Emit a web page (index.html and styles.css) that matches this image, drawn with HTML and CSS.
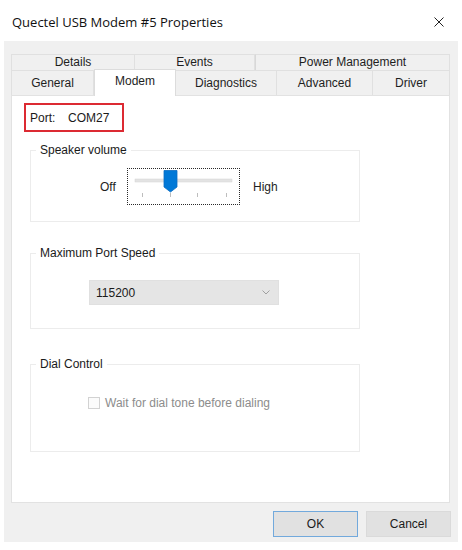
FILE: index.html
```html
<!DOCTYPE html>
<html>
<head>
<meta charset="utf-8">
<link rel="stylesheet" href="styles.css">
</head>
<body>
<div class="window">
  <div class="titlebar">
    <span class="title">Quectel USB Modem #5 Properties</span>
    <svg class="close" width="10" height="10" viewBox="0 0 10 10"><path d="M0.5 0.5 L9.5 9.5 M9.5 0.5 L0.5 9.5" stroke="#222" stroke-width="1" fill="none"/></svg>
  </div>
  <div class="dialog">
    <div class="tabs">
      <div class="tabrow upper">
        <div class="tab t-details">Details</div>
        <div class="tab t-events">Events</div>
        <div class="tab t-power">Power Management</div>
      </div>
      <div class="tabrow lower">
        <div class="tab t-general">General</div>
        <div class="tab t-modem selected">Modem</div>
        <div class="tab t-diag">Diagnostics</div>
        <div class="tab t-adv">Advanced</div>
        <div class="tab t-driver">Driver</div>
      </div>
    </div>
    <div class="panel">
      <div class="port"><span class="port-label">Port:</span><span class="port-value">COM27</span></div>

      <fieldset class="group g-speaker">
        <legend>Speaker volume</legend>
        <div class="slider-row">
          <span class="lbl-off">Off</span>
          <div class="slider">
            <svg width="111" height="35" viewBox="0 0 111 35">
              <rect x="7" y="10" width="97" height="3" fill="#e3e3e3" stroke="#d4d4d4" stroke-width="0.5"/>
              <g stroke="#bdbdbd" stroke-width="1">
                <line x1="14.5" y1="24" x2="14.5" y2="28"/>
                <line x1="42.5" y1="24" x2="42.5" y2="28"/>
                <line x1="69.5" y1="24" x2="69.5" y2="28"/>
                <line x1="98.5" y1="24" x2="98.5" y2="28"/>
              </g>
              <path d="M36 1.5 H49 V18 L42.5 23 L36 18 Z" fill="#0078d7" stroke="#0a6cc2" stroke-width="0.8"/>
            </svg>
          </div>
          <span class="lbl-high">High</span>
        </div>
      </fieldset>

      <fieldset class="group g-speed">
        <legend>Maximum Port Speed</legend>
        <div class="combo">
          <span>115200</span>
          <svg width="8" height="5" viewBox="0 0 8 5"><path d="M0.5 0.5 L4 4 L7.5 0.5" stroke="#a0a0a0" stroke-width="1" fill="none"/></svg>
        </div>
      </fieldset>

      <fieldset class="group g-dial">
        <legend>Dial Control</legend>
        <label class="check">
          <span class="box"></span>
          <span class="check-text">Wait for dial tone before dialing</span>
        </label>
      </fieldset>
    </div>
    <div class="buttons">
      <div class="btn ok">OK</div>
      <div class="btn cancel">Cancel</div>
    </div>
  </div>
</div>
</body>
</html>
```

FILE: styles.css
```css
* { box-sizing: border-box; }
html, body { margin: 0; padding: 0; background: #ffffff; }
body {
  width: 462px;
  height: 550px;
  font-family: "Liberation Sans", Arial, sans-serif;
  font-size: 12px;
  color: #1e1e1e;
  overflow: hidden;
}
.titlebar {
  height: 41px;
  display: flex;
  align-items: center;
  justify-content: space-between;
  padding: 2px 18px 0 12px;
}
.title {
  font-family: "Open Sans", "Noto Sans", sans-serif;
  font-size: 13px;
  color: #111;
}
.close { margin-top: 1px; }

.dialog {
  margin: 0 4px;
  height: 501px;
  background: #f0f0f0;
  padding: 13px 8px 0 7px;
}
.tabrow {
  display: flex;
}
.tabrow.upper { height: 16px; }
.tabrow.lower { height: 25px; align-items: flex-end; }
.tab {
  text-align: center;
  color: #1e1e1e;
  border: 1px solid #e0e0e0;
  border-bottom: none;
  background: #f0f0f0;
}
.tab + .tab { border-left: none; }
.upper .tab { height: 16px; line-height: 14px; }
.lower .tab { height: 25px; line-height: 24px; }
.t-details { width: 124px; }
.t-events { width: 120px; }
.t-power { width: 195px; border-left: 1px solid #d8d8d8 !important; }
.t-general { width: 83px; }
.t-modem { width: 82px; }
.t-diag { width: 101px; }
.t-adv { width: 96px; }
.t-driver { width: 77px; }
.lower .tab.selected {
  height: 27px;
  line-height: 22px;
  background: #ffffff;
  border: 1px solid #dcdcdc;
  border-bottom: none;
  margin-bottom: -1px;
  position: relative;
  z-index: 1;
}

.panel {
  height: 408px;
  background: #ffffff;
  border: 1px solid #e2e2e2;
  padding: 7px 0 0 12px;
}
.port {
  width: 100px;
  height: 29px;
  border: 2px solid #dc2a32;
  display: flex;
  align-items: center;
  padding-left: 4px;
  color: #1a1a1a;
}
.port-label { width: 38px; }

.group {
  margin: 0 0 0 6px;
  width: 330px;
  border: 1px solid #ececec;
  padding: 0;
}
.group legend {
  margin-left: 5px;
  padding: 0 4px;
  line-height: 14px;
  color: #1a1a1a;
}
.g-speaker { margin-top: 11px; padding-bottom: 16px; }
.g-speed { margin-top: 24px; padding-bottom: 23px; }
.g-dial { margin-top: 28px; padding-bottom: 41px; }

.slider-row {
  display: flex;
  align-items: center;
  margin-top: 11px;
  padding-left: 69px;
}
.lbl-off { width: 27px; }
.slider {
  width: 113px;
  height: 37px;
  border: 1px dotted #2a2a2a;
}
.slider svg { display: block; }
.lbl-high { margin-left: 13px; }

.combo {
  margin: 20px 0 0 58px;
  width: 190px;
  height: 25px;
  background: #e5e5e5;
  border: 1px solid #e0e0e0;
  display: flex;
  align-items: center;
  justify-content: space-between;
  padding: 0 8px 0 6px;
  color: #1a1a1a;
}

.check {
  display: flex;
  align-items: center;
  margin: 25px 0 0 57px;
}
.box {
  width: 12px;
  height: 12px;
  border: 1px solid #d2d2d2;
  background: #fbfbfb;
  margin-right: 5px;
}
.check-text { color: #8c8c8c; }

.buttons {
  display: flex;
  justify-content: flex-end;
  gap: 8px;
  margin-top: 8px;
  padding-right: 0;
  margin-right: -1px;
}
.btn {
  width: 85px;
  height: 26px;
  line-height: 24px;
  text-align: center;
  background: #e1e1e1;
  border: 1px solid #dadada;
  color: #1a1a1a;
}
.btn.ok { border: 1px solid #72a9dc; }
```
